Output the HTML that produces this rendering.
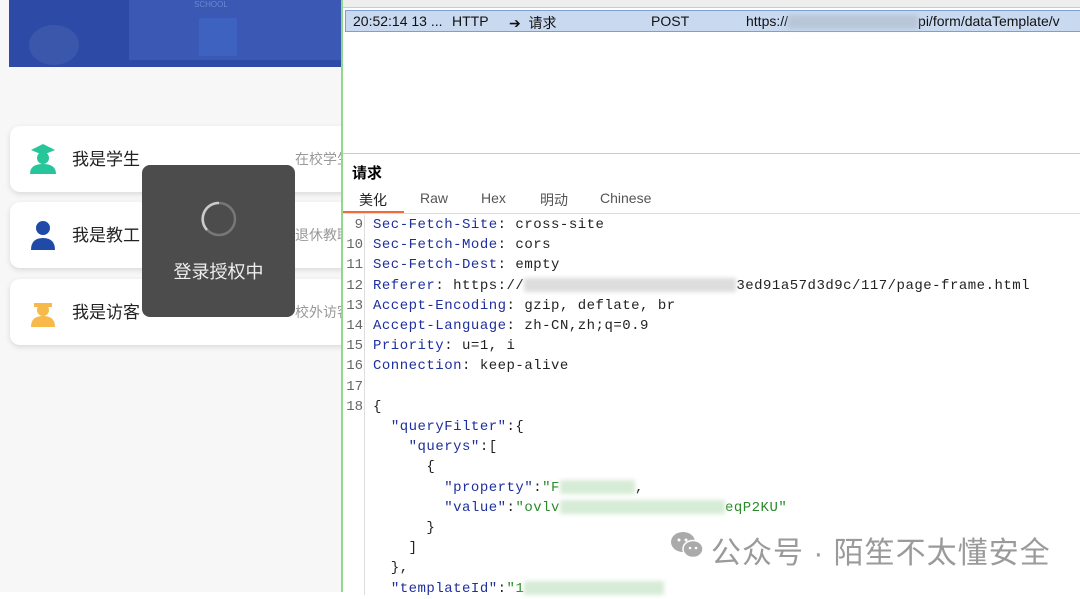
<!DOCTYPE html>
<html><head><meta charset="utf-8"><style>
*{margin:0;padding:0;box-sizing:border-box}
body{width:1080px;height:592px;overflow:hidden;background:#fff;position:relative;font-family:"Liberation Sans","Noto Sans CJK SC",sans-serif}
.left{position:absolute;left:0;top:0;width:341px;height:592px;background:#f7f7f7}
.banner{position:absolute;left:9px;top:0;width:332px;height:67px;background:#2d4ba6;overflow:hidden}
.card{position:absolute;left:10px;width:340px;height:66px;background:#fff;border-radius:10px;box-shadow:0 2px 6px rgba(0,0,0,.12)}
.card .t{position:absolute;left:62px;top:19px;font-size:17px;color:#222}
.card .s{position:absolute;left:285px;top:23px;font-size:14px;color:#999;white-space:nowrap}
.card svg{position:absolute;left:18px;top:16px}
.toast{position:absolute;left:142px;top:165px;width:153px;height:152px;background:#4c4c4c;border-radius:8px;color:#eee;font-size:18px;text-align:center}
.right{position:absolute;left:341px;top:0;width:739px;height:592px;border-left:2px solid #8fd98a;background:#fff}
.row{position:absolute;left:2px;top:10px;width:737px;height:22px;background:#c9d9ef;border:1px solid #7f9fcf;font-size:14px;color:#111}
.row .c{position:absolute;top:2px;white-space:nowrap}
.code{position:absolute;left:0;top:215px;font-family:"Liberation Mono",monospace;font-size:14px;line-height:20.2px}
.ln{position:absolute;left:2px;width:18px;text-align:right;color:#666;font-size:14px}
.gut{position:absolute;left:21px;top:215px;width:1px;height:380px;background:#ddd}
.k{color:#1e2f9e}.g{color:#2a8a2a}
.blur{display:inline-block;background:#ddd;filter:blur(2px);vertical-align:middle}
pre{letter-spacing:0.5px}
</style></head><body>
<div class="left">
 <div class="banner">
  <div style="position:absolute;left:120px;top:-10px;width:220px;height:70px;background:#3a58b4"></div>
  <div style="position:absolute;left:185px;top:0;width:50px;height:10px;color:#6f86cf;font-size:8px">SCHOOL</div>
  <div style="position:absolute;left:190px;top:18px;width:38px;height:38px;background:#3d62c0"></div>
  <div style="position:absolute;left:20px;top:25px;width:50px;height:40px;border-radius:50%;background:#3b57ac"></div>
 </div>
 <div class="card" style="top:126px"><svg width="30" height="34" viewBox="0 0 30 34"><path d="M3 8L15 2 27 8 15 13z" fill="#27c59a"/><circle cx="15" cy="16" r="6" fill="#27c59a"/><path d="M2 32Q2 22 15 22Q28 22 28 32z" fill="#27c59a"/></svg><div class="t">我是学生</div><div class="s">在校学生</div></div>
 <div class="card" style="top:202px"><svg width="30" height="34" viewBox="0 0 30 34"><circle cx="15" cy="10" r="7" fill="#1f4aa8"/><path d="M3 32Q3 20 15 20Q27 20 27 32z" fill="#1f4aa8"/></svg><div class="t">我是教工</div><div class="s">退休教职工</div></div>
 <div class="card" style="top:279px"><svg width="30" height="34" viewBox="0 0 30 34"><path d="M6 8h18v4H6z" fill="#f6b94a"/><circle cx="15" cy="15" r="6" fill="#f6b94a"/><path d="M3 32Q3 21 15 21Q27 21 27 32z" fill="#f6b94a"/></svg><div class="t">我是访客</div><div class="s">校外访客入校</div></div>
 <div class="toast"><svg width="36" height="36" style="margin-top:36px" viewBox="0 0 36 36"><circle cx="18" cy="18" r="16" fill="none" stroke="#777" stroke-width="2.5"/><path d="M18 2A16 16 0 0 0 6 29" fill="none" stroke="#ccc" stroke-width="2.5"/></svg><div style="margin-top:16px">登录授权中</div></div>
</div>
<div class="right">
 <div style="position:absolute;left:0;top:0;width:739px;height:8px;background:#eee;border-bottom:1px solid #ccc"></div>
 <div class="row"><span class="c" style="left:7px">20:52:14 13 ...</span><span class="c" style="left:106px">HTTP</span><span class="c" style="left:163px">➔&nbsp;&nbsp;请求</span><span class="c" style="left:305px">POST</span><span class="c" style="left:400px">https://<span class="blur" style="width:130px;height:14px;background:#b8c6d8"></span>pi/form/dataTemplate/v</span></div>
 <div style="position:absolute;left:0;top:153px;width:739px;height:1px;background:#ccc"></div>
 <div style="position:absolute;left:9px;top:162px;font-size:15px;font-weight:bold">请求</div>
 <div style="position:absolute;left:0;top:190px;font-size:14px;color:#555;width:739px;height:24px;border-bottom:1px solid #ddd">
  <span style="position:absolute;left:16px;color:#222">美化</span><span style="position:absolute;left:77px">Raw</span><span style="position:absolute;left:138px">Hex</span><span style="position:absolute;left:197px">明动</span><span style="position:absolute;left:257px">Chinese</span>
  <div style="position:absolute;left:0;top:21px;width:61px;height:2px;background:#f06a3a"></div>
 </div>
 <div class="gut"></div>
 <div class="code">
  <div class="ln" style="top:0">9</div><div class="ln" style="top:20.2px">10</div><div class="ln" style="top:40.4px">11</div><div class="ln" style="top:60.6px">12</div><div class="ln" style="top:80.8px">13</div><div class="ln" style="top:101px">14</div><div class="ln" style="top:121.2px">15</div><div class="ln" style="top:141.4px">16</div><div class="ln" style="top:161.6px">17</div><div class="ln" style="top:181.8px">18</div>
  <pre style="position:absolute;left:30px;top:0;font:inherit;line-height:20.2px;color:#222;letter-spacing:0.5px"><span class="k">Sec-Fetch-Site</span>: cross-site
<span class="k">Sec-Fetch-Mode</span>: cors
<span class="k">Sec-Fetch-Dest</span>: empty
<span class="k">Referer</span>: https://<span class="blur" style="width:212px;height:14px"></span>3ed91a57d3d9c/117/page-frame.html
<span class="k">Accept-Encoding</span>: gzip, deflate, br
<span class="k">Accept-Language</span>: zh-CN,zh;q=0.9
<span class="k">Priority</span>: u=1, i
<span class="k">Connection</span>: keep-alive

{
  <span class="k">"queryFilter"</span>:{
    <span class="k">"querys"</span>:[
      {
        <span class="k">"property"</span>:<span class="g">"F<span class="blur" style="width:75px;height:14px;background:#d6ecd6"></span></span>,
        <span class="k">"value"</span>:<span class="g">"ovlv<span class="blur" style="width:165px;height:14px;background:#d6ecd6"></span>eqP2KU"</span>
      }
    ]
  },
  <span class="k">"templateId"</span>:<span class="g">"1<span class="blur" style="width:140px;height:14px;background:#d6ecd6"></span></span></pre>
 </div>
 <div style="position:absolute;left:327px;top:530px;width:36px;height:30px">
  <svg width="36" height="30" viewBox="0 0 36 30"><ellipse cx="13" cy="12" rx="12" ry="10" fill="#aaa"/><ellipse cx="23" cy="19" rx="10" ry="8.5" fill="#aaa" stroke="#fff" stroke-width="1.5"/><circle cx="9" cy="10" r="1.5" fill="#fff"/><circle cx="16" cy="10" r="1.5" fill="#fff"/><circle cx="20" cy="18" r="1.3" fill="#fff"/><circle cx="26" cy="18" r="1.3" fill="#fff"/></svg>
 </div>
 <div style="position:absolute;left:368px;top:528px;font-size:30px;color:#9a9a9a;white-space:nowrap;letter-spacing:1px">公众号 · 陌笙不太懂安全</div>
</div>
</body></html>
